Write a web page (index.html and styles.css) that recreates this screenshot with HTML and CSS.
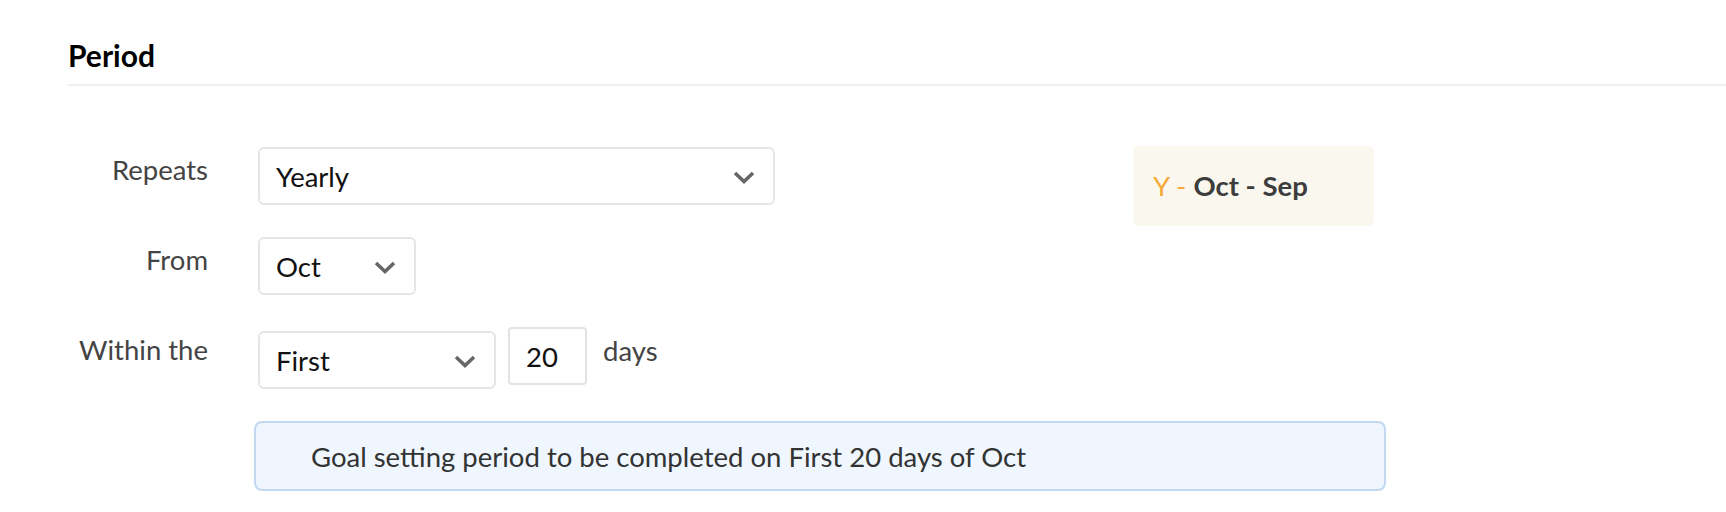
FILE: index.html
```html
<!DOCTYPE html>
<html lang="en">
<head>
    <meta charset="UTF-8">
    <meta name="viewport" content="width=device-width, initial-scale=1.0">
    <title>Period</title>
    <link rel="stylesheet" href="styles.css">
</head>
<body>
    <div class="period">
        <h2 class="period-title">Period</h2>

        <div class="period-form">
            <label class="field-label row-1">Repeats</label>
            <div class="field row-1">
                <div class="select select-wide">
                    <span>Yearly</span>
                    <svg class="chevron" viewBox="0 0 22 13"><path d="M2 2 L11 10.5 L20 2"/></svg>
                </div>
            </div>

            <div class="preview">
                <span class="preview-type">Y -</span>&nbsp;<strong>Oct - Sep</strong>
            </div>

            <label class="field-label row-2">From</label>
            <div class="field row-2">
                <div class="select select-month">
                    <span>Oct</span>
                    <svg class="chevron" viewBox="0 0 22 13"><path d="M2 2 L11 10.5 L20 2"/></svg>
                </div>
            </div>

            <label class="field-label row-3">Within the</label>
            <div class="field row-3">
                <div class="select select-order">
                    <span>First</span>
                    <svg class="chevron" viewBox="0 0 22 13"><path d="M2 2 L11 10.5 L20 2"/></svg>
                </div>
                <input class="days-input" type="text" value="20">
                <span class="days-text">days</span>
            </div>

            <div class="info-box">
                Goal setting period to be completed on First 20 days of Oct
            </div>
        </div>
    </div>
</body>
</html>
```

FILE: styles.css
```css
body {
    font-family: Lato, "Open Sans", sans-serif;
    font-size: 27.5px;
    line-height: 34px;
    color: #444;
    background-color: #fff;
    margin: 0;
    padding: 0;
}

.period {
    padding-top: 38px;
}

.period-title {
    margin: 0 0 0 68px;
    padding-bottom: 12px;
    font-size: 30px;
    line-height: 34px;
    font-weight: bold;
    color: #000;
    border-bottom: 2px solid #efefef;
}

.period-form {
    display: grid;
    grid-template-columns: 208px 925px 241px;
    row-gap: 32px;
    padding-top: 61px;
}

.field-label {
    grid-column: 1;
    text-align: right;
    padding-top: 6px;
}

.field {
    grid-column: 2;
    display: flex;
    align-items: flex-start;
    padding-left: 50px;
}

.row-1 { grid-row: 1; }
.row-2 { grid-row: 2; }
.row-3 { grid-row: 3; }

.select {
    box-sizing: border-box;
    height: 58px;
    display: flex;
    align-items: center;
    justify-content: space-between;
    padding: 2px 18px 0 16px;
    border: 2px solid #e6e6e6;
    border-radius: 6px;
    color: #111;
    background: #fff;
}

.select-wide {
    width: 517px;
}

.select-month {
    width: 158px;
}

.select-order {
    width: 238px;
    margin-top: 4px;
}

.chevron {
    width: 22px;
    height: 13px;
    fill: none;
    stroke: #666;
    stroke-width: 3.5;
}

.days-input {
    box-sizing: border-box;
    width: 79px;
    height: 58px;
    margin: 0 0 0 12px;
    padding: 0 0 0 16px;
    border: 2px solid #e3e3e3;
    border-radius: 4px;
    font-family: inherit;
    font-size: 27.5px;
    color: #111;
}

.days-text {
    margin-left: 16px;
    padding-top: 7px;
}

.preview {
    grid-column: 3;
    grid-row: 1 / 3;
    align-self: start;
    box-sizing: border-box;
    height: 80px;
    margin-top: -1px;
    display: flex;
    align-items: center;
    padding-left: 20px;
    background-color: #faf8ee;
    border-radius: 6px;
    white-space: pre;
}

.preview-type {
    color: #f5a93a;
}

.preview strong {
    color: #3d3d3d;
}

.info-box {
    grid-column: 2 / 4;
    grid-row: 4;
    box-sizing: border-box;
    width: 1132px;
    height: 70px;
    margin-left: 46px;
    display: flex;
    align-items: center;
    padding: 2px 0 0 55px;
    background-color: #eff6fd;
    border: 2px solid #c0d9f0;
    border-radius: 8px;
    color: #333;
}
```
